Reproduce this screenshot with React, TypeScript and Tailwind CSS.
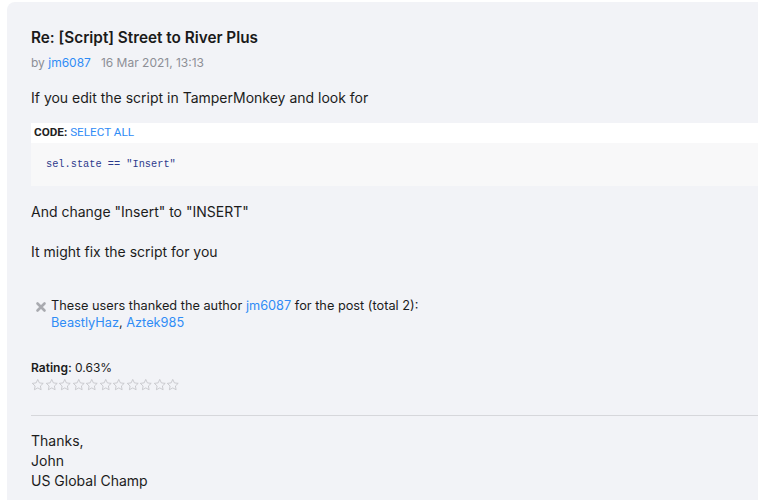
import React from "react"

const link = "text-[#2f8cf6]"

function Star() {
  return (
    <svg width="13.5" height="13.5" viewBox="0 0 24 24" className="shrink-0">
      <path
        d="M12 2.5l2.9 6.2 6.8.8-5 4.7 1.3 6.7L12 17.6l-6 3.3 1.3-6.7-5-4.7 6.8-.8z"
        fill="none"
        stroke="#c4c4c8"
        strokeWidth="1.5"
        strokeLinejoin="round"
      />
    </svg>
  )
}

export default function App() {
  return (
    <div className="bg-white h-[500px] overflow-hidden pt-[2px] pl-[7px]">
      <div
        className="bg-[#f2f3f7] rounded-tl-[8px] w-[820px] h-[520px] pl-6 pt-[26px] text-[#1c1c1c]"
        style={{ fontFamily: "Inter, 'Open Sans', sans-serif" }}
      >
        <h3 className="text-[15.3px] font-semibold leading-5 text-[#1a1a1a]">
          Re: [Script] Street to River Plus
        </h3>
        <div className="text-[12px] leading-4 mt-[7px] text-[#8d8f96]">
          by <a className={link}>jm6087</a>
          <span className="ml-[10px]">16 Mar 2021, 13:13</span>
        </div>

        <p className="text-[14px] leading-5 mt-[17px]">
          If you edit the script in TamperMonkey and look for
        </p>

        <div className="mt-[15px]">
          <div
            className="bg-white h-5 flex items-center pl-[3px] text-[11.7px] uppercase"
            style={{ fontFamily: "Roboto, 'Liberation Sans', sans-serif" }}
          >
            <span className="font-bold text-[#222]">Code:</span>
            <a className="ml-[3px] text-[#2f8cf6]">Select all</a>
          </div>
          <div className="bg-[#f8f8f9] h-[43px] pl-[15px] pt-[15px]">
            <code
              className="text-[10.3px] leading-3 text-[#2d3a8c] block"
              style={{ fontFamily: "'Liberation Mono', monospace" }}
            >
              sel.state == "Insert"
            </code>
          </div>
        </div>

        <p className="text-[14px] leading-5 mt-[16px]">
          And change "Insert" to "INSERT"
        </p>
        <p className="text-[14px] leading-5 mt-5">
          It might fix the script for you
        </p>

        <div className="flex mt-[35px] text-[12.75px] leading-[17px]">
          <svg width="20" height="17" viewBox="0 0 20 17" className="shrink-0">
            <path
              d="M6.5 6.5l7 7M13.5 6.5l-7 7"
              stroke="#a9aab0"
              strokeWidth="2.6"
              strokeLinecap="round"
            />
          </svg>
          <div>
            <div>
              These users thanked the author <a className={link}>jm6087</a> for the post (total 2):
            </div>
            <div>
              <a className={link}>BeastlyHaz</a>, <a className={link}>Aztek985</a>
            </div>
          </div>
        </div>

        <div className="mt-[29px] text-[12px] leading-4">
          <span className="font-semibold">Rating:</span> 0.63%
        </div>
        <div className="flex mt-[2px]">
          {Array.from({ length: 11 }).map((_, i) => (
            <Star key={i} />
          ))}
        </div>

        <div className="border-t border-[#d6d7db] mt-[23px] pt-[15px] text-[14px] leading-5">
          <div>Thanks,</div>
          <div>John</div>
          <div>US Global Champ</div>
        </div>
      </div>
    </div>
  )
}
